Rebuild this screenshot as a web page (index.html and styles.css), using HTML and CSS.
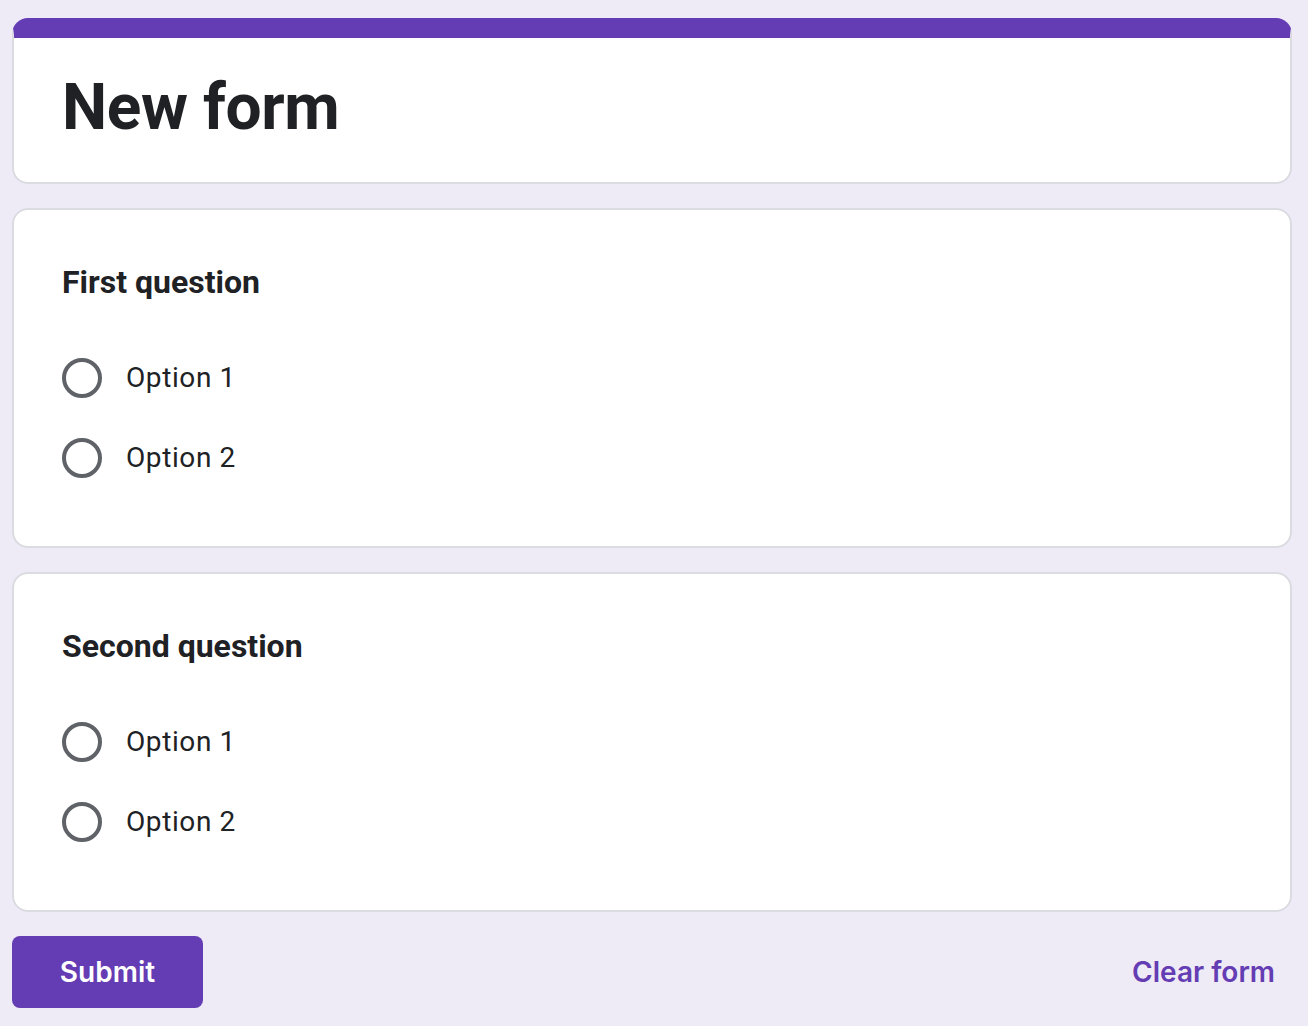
FILE: index.html
```html
<!DOCTYPE html>
<html>
<head>
<meta charset="utf-8">
<link rel="stylesheet" href="styles.css">
</head>
<body>
<div class="page">
  <div class="card title-card">
    <h1 class="form-title">New form</h1>
  </div>
  <div class="card question">
    <div class="q-title">First question</div>
    <div class="options">
      <label class="option"><span class="radio"></span><span class="opt-text">Option 1</span></label>
      <label class="option"><span class="radio"></span><span class="opt-text">Option 2</span></label>
    </div>
  </div>
  <div class="card question">
    <div class="q-title">Second question</div>
    <div class="options">
      <label class="option"><span class="radio"></span><span class="opt-text">Option 1</span></label>
      <label class="option"><span class="radio"></span><span class="opt-text">Option 2</span></label>
    </div>
  </div>
  <div class="actions">
    <button class="submit">Submit</button>
    <button class="clear">Clear form</button>
  </div>
</div>
</body>
</html>
```
FILE: styles.css
```css
html, body {
  margin: 0;
  padding: 0;
  background: #eeeaf6;
}
body {
  font-family: Roboto, "Liberation Sans", sans-serif;
  color: #202124;
}
.page {
  width: 1280px;
  padding: 18px 0 0 12px;
  display: flex;
  flex-direction: column;
  gap: 24px;
}
.card {
  background: #fff;
  border: 2px solid #dadce0;
  border-radius: 16px;
  box-sizing: border-box;
}
.title-card {
  border-top: 20px solid #643cb3;
  padding: 30px 48px 34px;
}
.form-title {
  margin: 0;
  font-size: 64px;
  line-height: 80px;
  font-weight: 700;
  color: #202124;
  letter-spacing: -0.4px;
}
.question {
  padding: 50px 48px 48px;
}
.q-title {
  font-size: 32px;
  line-height: 44px;
  font-weight: 700;
}
.options {
  margin-top: 34px;
  display: flex;
  flex-direction: column;
}
.option {
  height: 80px;
  display: flex;
  align-items: center;
  gap: 24px;
}
.radio {
  width: 40px;
  height: 40px;
  box-sizing: border-box;
  border: 4px solid #5f6368;
  border-radius: 50%;
  flex: none;
}
.opt-text {
  font-size: 28px;
  line-height: 40px;
  letter-spacing: 0.6px;
}
.actions {
  display: flex;
  justify-content: space-between;
  align-items: center;
}
.submit {
  width: 191px;
  height: 72px;
  border: none;
  border-radius: 8px;
  background: #643cb3;
  color: #fff;
  font-family: Inter, "Open Sans", sans-serif;
  font-size: 28px;
  font-weight: 600;
  padding: 0;
}
.clear {
  background: none;
  border: none;
  color: #643cb3;
  font-family: Inter, "Open Sans", sans-serif;
  font-size: 28px;
  font-weight: 600;
  padding: 0 17px 0 0;
}
```
